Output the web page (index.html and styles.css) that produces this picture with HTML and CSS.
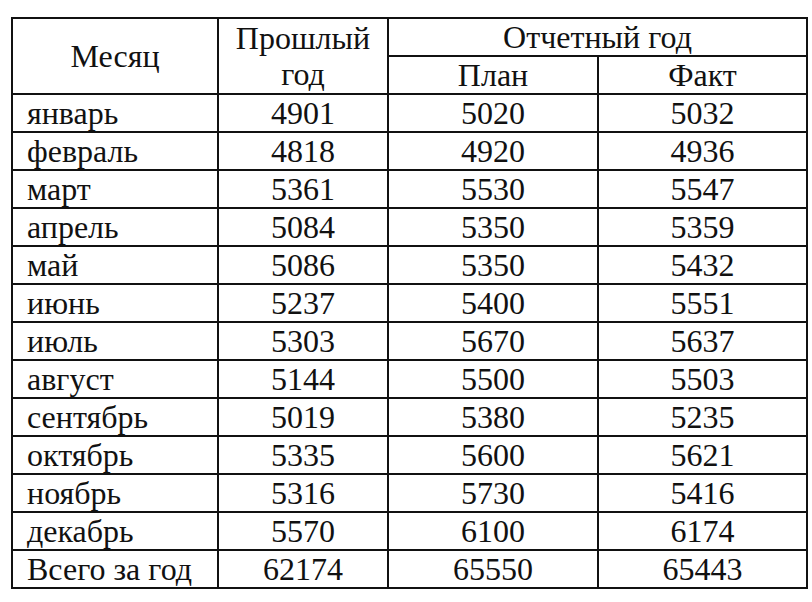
FILE: index.html
```html
<!DOCTYPE html>
<html lang="ru">
<head>
<meta charset="utf-8">
<link rel="stylesheet" href="styles.css">
</head>
<body>
<table class="report">
  <colgroup>
    <col class="c-month">
    <col class="c-prev">
    <col class="c-plan">
    <col class="c-fact">
  </colgroup>
  <thead>
    <tr>
      <th rowspan="2" class="cell">Месяц</th>
      <th rowspan="2" class="cell">Прошлый<br>год</th>
      <th colspan="2" class="cell">Отчетный год</th>
    </tr>
    <tr>
      <th class="cell">План</th>
      <th class="cell">Факт</th>
    </tr>
  </thead>
  <tbody>
    <tr><td class="cell m">январь</td><td class="cell">4901</td><td class="cell">5020</td><td class="cell">5032</td></tr>
    <tr><td class="cell m">февраль</td><td class="cell">4818</td><td class="cell">4920</td><td class="cell">4936</td></tr>
    <tr><td class="cell m">март</td><td class="cell">5361</td><td class="cell">5530</td><td class="cell">5547</td></tr>
    <tr><td class="cell m">апрель</td><td class="cell">5084</td><td class="cell">5350</td><td class="cell">5359</td></tr>
    <tr><td class="cell m">май</td><td class="cell">5086</td><td class="cell">5350</td><td class="cell">5432</td></tr>
    <tr><td class="cell m">июнь</td><td class="cell">5237</td><td class="cell">5400</td><td class="cell">5551</td></tr>
    <tr><td class="cell m">июль</td><td class="cell">5303</td><td class="cell">5670</td><td class="cell">5637</td></tr>
    <tr><td class="cell m">август</td><td class="cell">5144</td><td class="cell">5500</td><td class="cell">5503</td></tr>
    <tr><td class="cell m">сентябрь</td><td class="cell">5019</td><td class="cell">5380</td><td class="cell">5235</td></tr>
    <tr><td class="cell m">октябрь</td><td class="cell">5335</td><td class="cell">5600</td><td class="cell">5621</td></tr>
    <tr><td class="cell m">ноябрь</td><td class="cell">5316</td><td class="cell">5730</td><td class="cell">5416</td></tr>
    <tr><td class="cell m">декабрь</td><td class="cell">5570</td><td class="cell">6100</td><td class="cell">6174</td></tr>
    <tr><td class="cell m">Всего за год</td><td class="cell">62174</td><td class="cell">65550</td><td class="cell">65443</td></tr>
  </tbody>
</table>
</body>
</html>
```

FILE: styles.css
```css
html {
  font-family: "Liberation Serif", "Times New Roman", "DejaVu Serif", serif;
}
body {
  margin: 0;
  padding: 17px 0 0 11px;
  background: #ffffff;
  color: #111111;
}
.report {
  border-collapse: collapse;
  table-layout: fixed;
  width: 795px;
  font-size: 32px;
}
.c-month { width: 206px; }
.c-prev { width: 170px; }
.c-plan { width: 210px; }
.c-fact { width: 209px; }
.cell {
  border: 2px solid #111111;
  padding: 0;
  text-align: center;
  font-weight: normal;
  line-height: 36px;
  height: 36px;
  vertical-align: middle;
}
.m {
  text-align: left;
  padding-left: 14px;
}
```
